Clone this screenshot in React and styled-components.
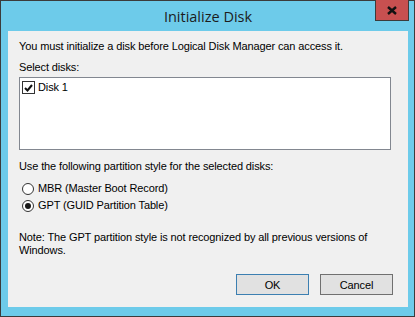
import React from "react";
import styled, { createGlobalStyle } from "styled-components";

const Global = createGlobalStyle`
  html, body { margin: 0; padding: 0; background: #6dcbea; }
  * { box-sizing: border-box; }
`;

const Frame = styled.div`
  position: relative;
  width: 415px;
  height: 317px;
  border: 1px solid #3b3b3b;
  background: #6dcbea;
  display: flex;
  flex-direction: column;
  padding: 0 6px 9px 7px;
  font-family: "Liberation Sans", Arial, sans-serif;
  font-size: 11px;
  letter-spacing: -0.12px;
  color: #000;
`;

const TitleBar = styled.div`
  height: 30px;
  display: flex;
  align-items: center;
  justify-content: center;
  font-family: "Open Sans", "Noto Sans", sans-serif;
  font-size: 14.5px;
  letter-spacing: 0;
  color: #1c1c1c;
  padding-top: 1px;
`;

const CloseButton = styled.div`
  position: absolute;
  top: -1px;
  right: 5px;
  width: 34px;
  height: 21px;
  background: #c75050;
  border: 1px solid #3b3b3b;
  border-top: none;
  display: flex;
  align-items: center;
  justify-content: center;
`;

const Content = styled.div`
  flex: 1;
  background: #f0f0f0;
  display: flex;
  flex-direction: column;
  padding: 9px 15px 12px 11px;
`;

const Line = styled.div`
  line-height: 13px;
  white-space: nowrap;
  margin-top: ${(p) => p.$mt || 0}px;
`;

const ListBox = styled.div`
  width: 372px;
  height: 73px;
  margin-top: 3px;
  border: 1px solid #828790;
  background: #fff;
  padding: 3px 2px;
`;

const ListItem = styled.label`
  display: flex;
  align-items: center;
  gap: 3px;
  height: 13px;
  line-height: 13px;
`;

const CheckBox = styled.span`
  width: 13px;
  height: 13px;
  border: 1px solid #333;
  background: #fff;
  display: flex;
  align-items: center;
  justify-content: center;
`;

const RadioGroup = styled.div`
  display: flex;
  flex-direction: column;
  gap: 4px;
  margin-top: 9px;
`;

const RadioRow = styled.label`
  display: flex;
  align-items: center;
  gap: 4px;
  height: 13px;
  line-height: 13px;
  padding-left: 3px;
`;

const Radio = styled.span`
  width: 12px;
  height: 12px;
  border-radius: 50%;
  border: 1px solid #333;
  background: #fff;
  display: flex;
  align-items: center;
  justify-content: center;
  &::after {
    content: "";
    width: 6px;
    height: 6px;
    border-radius: 50%;
    background: ${(p) => (p.$checked ? "#1a1a1a" : "transparent")};
  }
`;

const ButtonRow = styled.div`
  margin-top: auto;
  display: flex;
  justify-content: flex-end;
  gap: 11px;
`;

const Button = styled.div`
  width: 73px;
  height: 21px;
  background: #e1e1e1;
  border: 1px solid ${(p) => (p.$default ? "#3c7fb1" : "#707070")};
  display: flex;
  align-items: center;
  justify-content: center;
  font-size: 11px;
`;

export default function App() {
  return (
    <>
      <Global />
      <Frame>
        <TitleBar>Initialize Disk</TitleBar>
        <CloseButton>
          <svg width="10" height="9" viewBox="0 0 10 9">
            <path d="M1 1 L9 8 M9 1 L1 8" stroke="#111" strokeWidth="2.4" />
          </svg>
        </CloseButton>
        <Content>
          <Line>You must initialize a disk before Logical Disk Manager can access it.</Line>
          <Line $mt={8}>Select disks:</Line>
          <ListBox>
            <ListItem>
              <CheckBox>
                <svg width="9" height="8" viewBox="0 0 9 8">
                  <path d="M1 4 L3.5 6.5 L8 1" stroke="#111" strokeWidth="2" fill="none" />
                </svg>
              </CheckBox>
              Disk 1
            </ListItem>
          </ListBox>
          <Line $mt={10}>Use the following partition style for the selected disks:</Line>
          <RadioGroup>
            <RadioRow>
              <Radio />
              MBR (Master Boot Record)
            </RadioRow>
            <RadioRow>
              <Radio $checked />
              GPT (GUID Partition Table)
            </RadioRow>
          </RadioGroup>
          <Line $mt={19}>
            Note: The GPT partition style is not recognized by all previous versions of
          </Line>
          <Line>Windows.</Line>
          <ButtonRow>
            <Button $default>OK</Button>
            <Button>Cancel</Button>
          </ButtonRow>
        </Content>
      </Frame>
    </>
  );
}
